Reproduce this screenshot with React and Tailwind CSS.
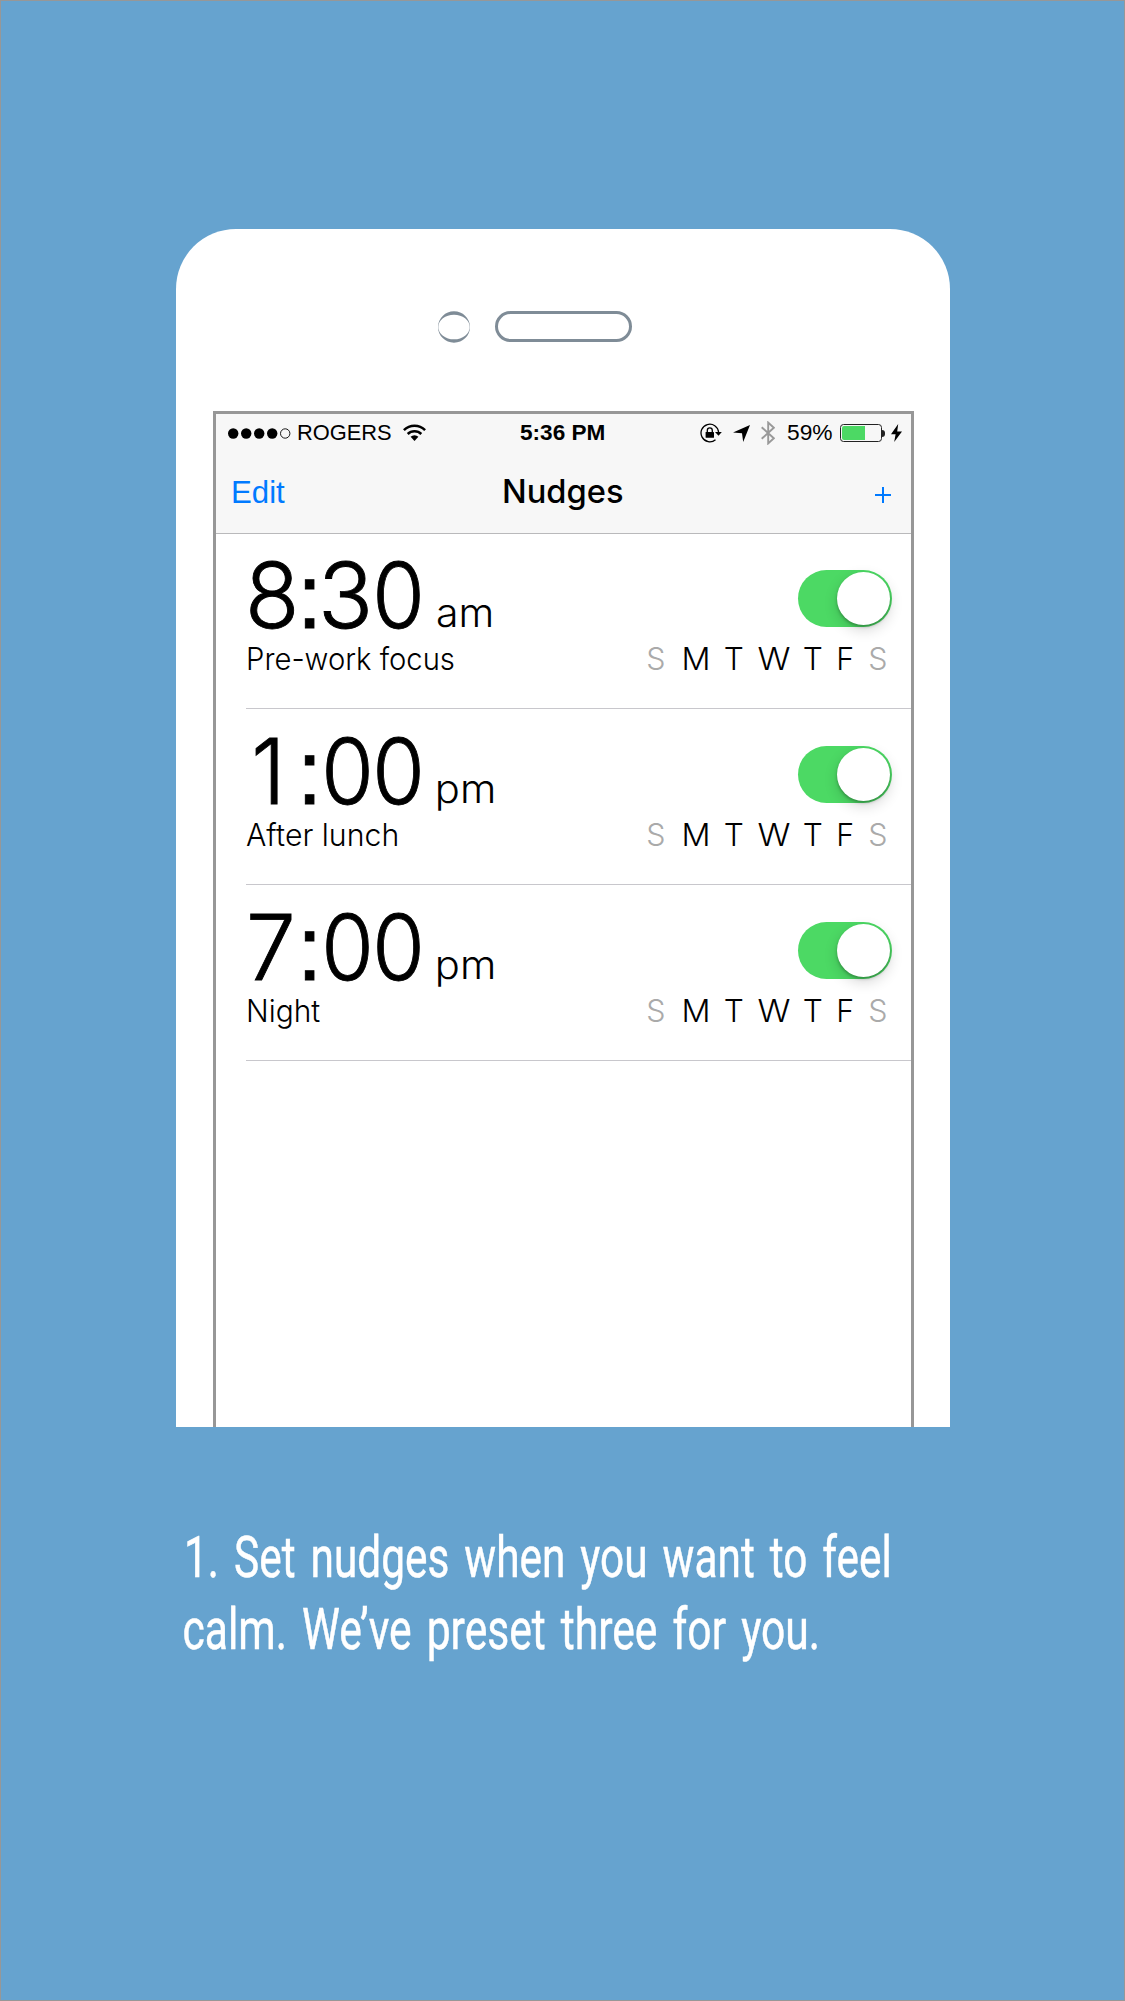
import { useLayoutEffect, useRef } from "react";

const INTER = "font-['Inter','Liberation_Sans',sans-serif]";

// Single line of text whose inked width is fitted to its box.
function Fit({ children, className = "" }) {
  const box = useRef(null);
  const text = useRef(null);
  useLayoutEffect(() => {
    const style = getComputedStyle(text.current);
    const ctx = document.createElement("canvas").getContext("2d");
    ctx.font = `${style.fontWeight} ${style.fontSize} ${style.fontFamily}`;
    ctx.wordSpacing = style.wordSpacing;
    const m = ctx.measureText(children);
    const scale = box.current.offsetWidth / (m.actualBoundingBoxLeft + m.actualBoundingBoxRight);
    text.current.style.transform = `translateX(${m.actualBoundingBoxLeft * scale}px) scaleX(${scale})`;
  }, [children]);
  return (
    <span ref={box} className={`inline-block shrink-0 whitespace-nowrap ${className}`}>
      <span ref={text} className="inline-block origin-left">{children}</span>
    </span>
  );
}

const COLON = "w-[9px] font-['Liberation_Sans',sans-serif]";

const nudges = [
  {
    time: [["8", "ml-[4px] w-[44px]"], [":", `ml-[11px] ${COLON}`], ["3", "ml-[10px] w-[44px]"], ["0", "ml-[9px] w-[43px]"]],
    half: "am", halfBox: "ml-[17px] w-[54px]", label: "Pre-work focus", labelBox: "ml-[2px] w-[206px]",
  },
  {
    time: [["1", "ml-[10px] w-[22px]"], [":", `ml-[27px] ${COLON}`], ["0", "ml-[12px] w-[43px]"], ["0", "ml-[8px] w-[43px]"]],
    half: "pm", halfBox: "ml-[18px] w-[55px]", label: "After lunch", labelBox: "w-[151px]",
  },
  {
    time: [["7", "ml-[4px] w-[42px]"], [":", `ml-[13px] ${COLON}`], ["0", "ml-[12px] w-[43px]"], ["0", "ml-[8px] w-[43px]"]],
    half: "pm", halfBox: "ml-[18px] w-[55px]", label: "Night", labelBox: "ml-[2px] w-[72px]",
  },
];

const days = [
  ["S", "scale-x-[0.98] text-[#aaa]"],
  ["M", "scale-x-[1.04]"],
  ["T", "scale-x-[1.02]"],
  ["W", "scale-x-[1.1]"],
  ["T", "scale-x-[1.02]"],
  ["F", "scale-x-[0.98]"],
  ["S", "scale-x-[0.98] text-[#aaa]"],
];

function StatusBar() {
  return (
    <div className="flex h-[38px] items-center pl-[12px] text-[22px] leading-[38px] text-black">
      <svg className="h-[11px] w-[63px] shrink-0" viewBox="0 0 63 11">
        {[5.2, 18.2, 31.2, 44.2].map((x) => <circle key={x} cx={x} cy="5.5" r="5.2" />)}
        <circle cx="57.2" cy="5.5" r="4.7" fill="none" stroke="#000" strokeWidth="0.9" />
      </svg>
      <Fit className="ml-[7px] w-[93px]">ROGERS</Fit>
      <svg className="ml-[12px] h-[18px] w-[23px] shrink-0" viewBox="0 0 23 18">
        <g fill="none" stroke="#000" strokeWidth="2.5">
          <path d="M0.9 6.2a15 15 0 0 1 21.2 0" />
          <path d="M4.7 10a9.6 9.6 0 0 1 13.6 0" />
        </g>
        <path d="M7.6 12.8a5.5 5.5 0 0 1 7.8 0L11.5 17z" />
      </svg>
      <Fit className="ml-[94px] w-[84px] font-bold">5:36 PM</Fit>
      <svg className="ml-[96px] h-[20px] w-[22px] shrink-0" viewBox="0 0 22 20">
        <path d="M15.5 16.7A8.8 8.8 0 1 1 18.6 9.2" fill="none" stroke="#000" strokeWidth="1.3" />
        <path d="M15 9h6.8l-3.3 3.7z" />
        <rect x="5.6" y="9" width="8.4" height="5.8" rx="0.6" />
        <path d="M7.3 9.5V7.4a2.5 2.5 0 0 1 5 0v2.1" fill="none" stroke="#000" strokeWidth="1.3" />
      </svg>
      <svg className="ml-[11px] h-[17px] w-[17px] shrink-0" viewBox="0 0 17 17">
        <path d="M17 0 10.2 17 9 8.2 0 7.6z" />
      </svg>
      <svg className="ml-[11px] h-[24px] w-[14px] shrink-0" viewBox="0 0 14 24">
        <path d="M0.7 6.3 12.8 17.2 7.2 22.4V1.6l5.6 5.2L0.7 17.7" fill="none" stroke="#999" strokeWidth="1.9" />
      </svg>
      <Fit className="ml-[12px] w-[45px]">59%</Fit>
      <span className="ml-[8px] h-[18px] w-[42px] shrink-0 rounded-[3.5px] border border-[#222] p-px">
        <span className="block h-full w-[23px] rounded-l-[2px] bg-[#4cd964]" />
      </span>
      <span className="h-[7px] w-[3px] shrink-0 rounded-r-[3px] bg-[#222]" />
      <svg className="ml-[6px] h-[18px] w-[11px] shrink-0" viewBox="0 0 11 18">
        <path d="M7.2 0 0 10.2h4.6L3.2 18 11 7.4H6.2z" />
      </svg>
    </div>
  );
}

function NavBar() {
  return (
    <div className="flex h-[80px] items-start pl-[17px] pt-[20px] leading-[40px]">
      <Fit className="w-[52px] text-[31.5px] text-[#007aff]">Edit</Fit>
      <Fit className={`ml-[219px] w-[119px] text-[32.5px] font-medium text-black ${INTER}`}>Nudges</Fit>
      <svg className="ml-[252px] mt-[15px] h-[16px] w-[16px]" viewBox="0 0 16 16">
        <path d="M8 0v16M0 8h16" stroke="#007aff" strokeWidth="2" />
      </svg>
    </div>
  );
}

function Toggle() {
  return (
    <div className="flex h-[57px] w-[94px] items-center justify-end rounded-full bg-[#4cd964] pr-[2px]">
      <span className="h-[53px] w-[53px] rounded-full bg-white shadow-[0_5px_14px_rgba(0,0,0,0.16),0_2px_3px_rgba(0,0,0,0.25)]" />
    </div>
  );
}

function Days() {
  return (
    <div className="mt-[14px] grid grid-cols-[30px_49px_28px_51px_27px_38px_28px] text-center text-[31px] font-light leading-[36px] text-black">
      {days.map(([day, style], i) => (
        <span key={i}>
          <span className={`inline-block ${style}`}>{day}</span>
        </span>
      ))}
    </div>
  );
}

function Nudge({ n }) {
  return (
    <div className={`ml-[30px] flex h-[176px] justify-between border-b border-[#c8c7cc] pr-[19px] ${INTER}`}>
      <div className="pt-[16px] font-light text-black">
        <div className="flex h-[90px] items-baseline leading-[90px]">
          {n.time.map(([char, box], i) => (
            <Fit key={i} className={`translate-y-px text-[91px] [-webkit-text-stroke:0.9px_black] ${box}`}>{char}</Fit>
          ))}
          <Fit className={`text-[39px] ${n.halfBox}`}>{n.half}</Fit>
        </div>
        <div className="mt-[2px] flex h-[36px] leading-[36px]">
          <Fit className={`text-[31px] ${n.labelBox}`}>{n.label}</Fit>
        </div>
      </div>
      <div className="flex flex-col items-end pt-[37px]">
        <Toggle />
        <Days />
      </div>
    </div>
  );
}

export default function App() {
  return (
    <div className="flex h-[2001px] w-[1125px] flex-col border border-[#979797] bg-[#66a3cf] pt-[228px] font-['Liberation_Sans',Arial,sans-serif]">
      <div className="ml-[174.5px] flex h-[1197.5px] w-[774.5px] flex-col rounded-t-[60px] bg-white">
        <div className="ml-[262.5px] flex h-[182px] items-start pt-[82px]">
          <svg className="h-[32px] w-[32px]" viewBox="0 0 32 32">
            <path fillRule="evenodd" fill="#7f8c97" d="M0 16a16 15.7 0 0 1 32 0a16 15.7 0 0 1-32 0zM0.3 16a15.7 12.3 0 0 0 31.4 0a15.7 12.3 0 0 0-31.4 0z" />
          </svg>
          <div className="ml-[25px] h-[31px] w-[137px] rounded-full border-[3px] border-[#7f8c97]" />
        </div>
        <div className="ml-[37.5px] w-[701px] flex-1 border-x-[3px] border-t-[3px] border-[#979797] bg-white">
          <div className="h-[120px] border-b border-[#b9b9bb] bg-[#f7f7f7]">
            <StatusBar />
            <NavBar />
          </div>
          <div className="-mt-px">
            {nudges.map((n) => <Nudge key={n.label} n={n} />)}
          </div>
        </div>
      </div>
      <div className="ml-[183px] mt-[95.5px] flex flex-col font-['Roboto',sans-serif] text-[57px] font-normal leading-[71.5px] text-white [-webkit-text-stroke:0.5px_white] [word-spacing:6px]">
        <Fit className="ml-[3px] w-[702px]">1. Set nudges when you want to feel</Fit>
        <Fit className="w-[633px]">calm. We’ve preset three for you.</Fit>
      </div>
    </div>
  );
}
